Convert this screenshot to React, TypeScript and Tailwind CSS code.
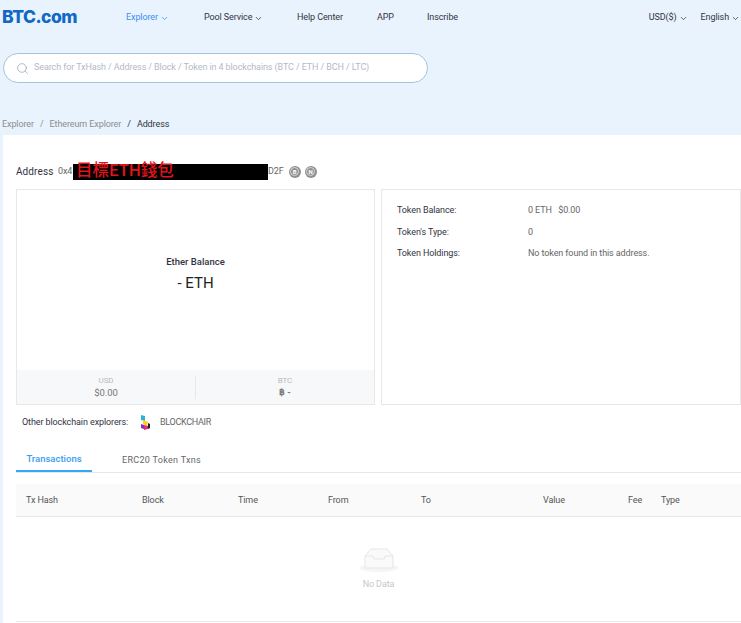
import React from 'react';
import { ChevronDown, Search } from 'lucide-react';

const nav = [
  { label: 'Explorer', caret: true, active: true, w: 'w-[78px]' },
  { label: 'Pool Service', caret: true, active: false, w: 'w-[93px]' },
  { label: 'Help Center', caret: false, active: false, w: 'w-[80px]' },
  { label: 'APP', caret: false, active: false, w: 'w-[50px]' },
  { label: 'Inscribe', caret: false, active: false, w: 'w-[40px]' },
];

const columns = [
  { label: 'Tx Hash', w: 'w-[116px]' },
  { label: 'Block', w: 'w-[96px]' },
  { label: 'Time', w: 'w-[90px]' },
  { label: 'From', w: 'w-[93px]' },
  { label: 'To', w: 'w-[122px]' },
  { label: 'Value', w: 'w-[85px]' },
  { label: 'Fee', w: 'w-[33px]' },
  { label: 'Type', w: 'w-[40px]' },
];

const tokenRows = [
  { label: 'Token Balance:', value: '0 ETH \u00a0 $0.00' },
  { label: "Token's Type:", value: '0' },
  { label: 'Token Holdings:', value: 'No token found in this address.' },
];

const CoinIcon = ({ letter }: { letter: string }) => (
  <span className="flex h-[12px] w-[12px] items-center justify-center rounded-full bg-[#8f8f8f]">
    <span className="flex h-[9px] w-[9px] items-center justify-center rounded-full border border-[#d8d8d8] text-[6px] leading-none font-bold text-white">
      {letter}
    </span>
  </span>
);

const BlockchairLogo = () => (
  <svg width="12" height="16" viewBox="0 0 12 16">
    <path d="M2 0l4 1v5L2 5z" fill="#27b5d6" />
    <path d="M4 5l5 2-1 4-4-2z" fill="#f5d90a" />
    <path d="M2 9l3 1v4l-3-1z" fill="#8e2bc4" />
    <path d="M5 10l4 1v3l-4 1z" fill="#d8327f" />
    <path d="M9 8l2 1v4l-2 1z" fill="#222" />
  </svg>
);

const EmptyBox = () => (
  <svg width="40" height="26" viewBox="0 0 40 26">
    <ellipse cx="20" cy="21" rx="19.5" ry="4" fill="#f5f5f5" />
    <path d="M6 9l6-7h16l6 7v11a1 1 0 0 1-1 1H7a1 1 0 0 1-1-1z" fill="#fafafa" stroke="#e6e6e6" />
    <path d="M6 9h8l1 3h10l1-3h8" fill="none" stroke="#e6e6e6" />
  </svg>
);

export default function App() {
  return (
    <div className="h-[623px] w-[741px] overflow-hidden bg-[#e8f3fe] font-['Roboto','Noto_Sans_CJK_TC',sans-serif] text-[9px] tracking-[-0.1px] text-[#33333f]">
      <header className="flex h-[36px] items-center pr-[1px]">
        <span className="w-[126px] pb-[2px] pl-[2px] font-['Inter',sans-serif] text-[17.5px] font-extrabold tracking-[-0.5px] text-[#1268c4]">
          BTC.com
        </span>
        <nav className="flex items-center">
          {nav.map((item) => (
            <span
              key={item.label}
              className={`flex items-center gap-[2px] ${item.w} ${item.active ? 'text-[#3d8ff0]' : ''}`}
            >
              {item.label}
              {item.caret && <ChevronDown size={9} />}
            </span>
          ))}
        </nav>
        <div className="ml-auto flex items-center gap-[13px]">
          <span className="flex items-center gap-[2px]">
            USD($) <ChevronDown size={9} />
          </span>
          <span className="flex items-center gap-[2px]">
            English <ChevronDown size={9} />
          </span>
        </div>
      </header>

      <div className="pt-[17px] pl-[3px]">
        <div className="flex h-[30px] w-[425px] items-center rounded-full border border-[#a5c3df] bg-white pl-[12px]">
          <Search size={13} strokeWidth={1.2} className="text-[#8a9aa8]" />
          <span className="ml-[5px] text-[#b5b9c6]">
            Search for TxHash / Address / Block / Token in 4 blockchains (BTC / ETH / BCH / LTC)
          </span>
        </div>
      </div>

      <div className="flex h-[52px] items-center gap-[6px] pt-[32px] pl-[2px] text-[#8e8e8e]">
        <span>Explorer</span>
        <span>/</span>
        <span>Ethereum Explorer</span>
        <span className="text-[#33333f]">/</span>
        <span className="text-[#33333f]">Address</span>
      </div>

      <main className="ml-[3px] h-[488px] bg-white pl-[13px]">
        <div className="flex h-[54px] items-center pt-[19px]">
          <span className="w-[42px] text-[10px] tracking-[0.1px]">Address</span>
          <span className="w-[15px] text-[#666]">0x4</span>
          <span className="flex h-[16px] w-[195px] items-center bg-black pl-[3px] text-[16.5px] leading-none font-medium tracking-[0.1px] text-[#e0141a]">
            目標ETH錢包
          </span>
          <span className="text-[#666]">D2F</span>
          <span className="ml-[5px] flex gap-[4px]">
            <CoinIcon letter="B" />
            <CoinIcon letter="N" />
          </span>
        </div>

        <div className="flex gap-[6px]">
          <section className="flex h-[216px] w-[359px] flex-col border border-[#e8e8e8]">
            <div className="flex flex-1 flex-col items-center justify-center pb-[12px]">
              <span className="text-[9.5px] font-medium tracking-normal text-[#33333f]">Ether Balance</span>
              <span className="mt-[4px] text-[15px] leading-[20px] tracking-normal text-[#222]">- ETH</span>
            </div>
            <div className="flex h-[34px] items-center bg-[#f7f8fa]">
              <div className="flex h-[23px] w-[179px] flex-col items-center justify-center border-r border-[#e8e8e8]">
                <span className="text-[8px] leading-[11px] text-[#bbb]">USD</span>
                <span className="text-[9.5px] leading-[13px] text-[#777]">$0.00</span>
              </div>
              <div className="flex flex-1 flex-col items-center justify-center">
                <span className="text-[8px] leading-[11px] text-[#bbb]">BTC</span>
                <span className="leading-[13px] font-bold text-[#777]">฿ -</span>
              </div>
            </div>
          </section>
          <section className="h-[216px] flex-1 border border-[#e8e8e8] pt-[10px] pl-[15px]">
            {tokenRows.map((row) => (
              <div key={row.label} className="flex h-[21.5px] items-center">
                <span className="w-[131px]">{row.label}</span>
                <span className="text-[#666]">{row.value}</span>
              </div>
            ))}
          </section>
        </div>

        <div className="flex h-[36px] items-center pl-[6px]">
          <span className="w-[105px] whitespace-nowrap">Other blockchain explorers:</span>
          <span className="mr-[9px] ml-[12px] flex">
            <BlockchairLogo />
          </span>
          <span className="tracking-[-0.3px] text-[#666]">BLOCKCHAIR</span>
        </div>

        <div className="mt-[1px] flex h-[31px] border-b border-[#e8e8e8]">
          <span className="flex w-[76px] items-center justify-center border-b-2 border-[#35a5f5] pt-[7px] text-[9.5px] font-medium tracking-normal text-[#3d9cf0]">
            Transactions
          </span>
          <span className="flex items-center pt-[7px] pl-[30px] tracking-[0.3px] text-[#666]">ERC20 Token Txns</span>
        </div>

        <div className="mt-[11px] flex h-[33px] items-center border-b border-[#e8e8e8] bg-[#fafafa] pt-[2px] pl-[10px] text-[#555]">
          {columns.map((col) => (
            <span key={col.label} className={col.w}>
              {col.label}
            </span>
          ))}
        </div>

        <div className="flex h-[105px] flex-col items-center justify-center border-b border-[#e8e8e8]">
          <EmptyBox />
          <span className="mt-[5px] text-[#c8c8c8]">No Data</span>
        </div>
      </main>
    </div>
  );
}
